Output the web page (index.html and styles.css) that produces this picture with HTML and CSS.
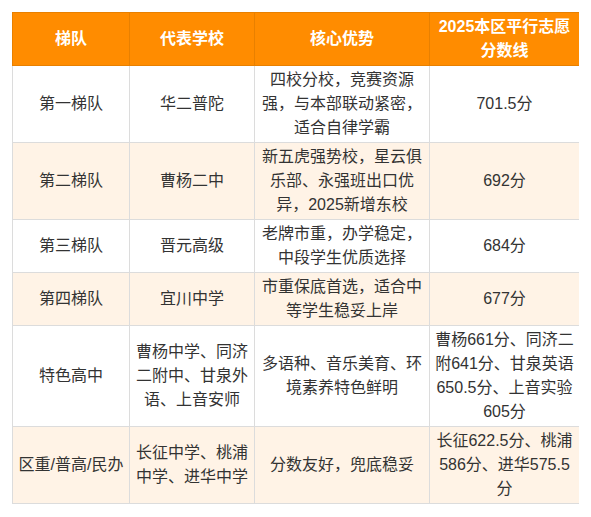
FILE: index.html
```html
<!DOCTYPE html>
<html lang="zh-CN">
<head>
<meta charset="utf-8">
<link rel="stylesheet" href="styles.css">
</head>
<body>
<table class="tier-table">
  <colgroup>
    <col class="c1"><col class="c2"><col class="c3"><col class="c4">
  </colgroup>
  <thead>
    <tr>
      <th>梯队</th>
      <th>代表学校</th>
      <th>核心优势</th>
      <th>2025本区平行志愿分数线</th>
    </tr>
  </thead>
  <tbody>
    <tr>
      <td>第一梯队</td>
      <td>华二普陀</td>
      <td>四校分校，竞赛资源强，与本部联动紧密，适合自律学霸</td>
      <td>701.5分</td>
    </tr>
    <tr class="alt">
      <td>第二梯队</td>
      <td>曹杨二中</td>
      <td>新五虎强势校，星云俱乐部、永强班出口优异，2025新增东校</td>
      <td>692分</td>
    </tr>
    <tr>
      <td>第三梯队</td>
      <td>晋元高级</td>
      <td>老牌市重，办学稳定，中段学生优质选择</td>
      <td>684分</td>
    </tr>
    <tr class="alt">
      <td>第四梯队</td>
      <td>宜川中学</td>
      <td>市重保底首选，适合中等学生稳妥上岸</td>
      <td>677分</td>
    </tr>
    <tr>
      <td>特色高中</td>
      <td>曹杨中学、同济二附中、甘泉外语、上音安师</td>
      <td>多语种、音乐美育、环境素养特色鲜明</td>
      <td>曹杨661分、同济二附641分、甘泉英语650.5分、上音实验605分</td>
    </tr>
    <tr class="alt">
      <td>区重/普高/民办</td>
      <td>长征中学、桃浦中学、进华中学</td>
      <td>分数友好，兜底稳妥</td>
      <td>长征622.5分、桃浦586分、进华575.5分</td>
    </tr>
  </tbody>
</table>
</body>
</html>
```
FILE: styles.css
```css
html, body {
  background: #ffffff;
}
body {
  margin: 12px;
  font-family: "Liberation Sans", "Noto Sans CJK SC", sans-serif;
  font-size: 16px;
  color: #333333;
}
.tier-table {
  border-collapse: collapse;
  table-layout: fixed;
  width: 567px;
}
.c1 { width: 117px; }
.c2 { width: 125px; }
.c3 { width: 175px; }
.c4 { width: 150px; }
.tier-table th,
.tier-table td {
  border: 1px solid #dcdcdc;
  padding: 2px 4px;
  line-height: 24px;
  text-align: center;
  vertical-align: middle;
  word-break: break-all;
}
.tier-table th {
  background: #ff8c00;
  color: #ffffff;
  font-weight: bold;
  border-color: #e88000;
}
.tier-table tr.alt td {
  background: #fff3e6;
}
```
